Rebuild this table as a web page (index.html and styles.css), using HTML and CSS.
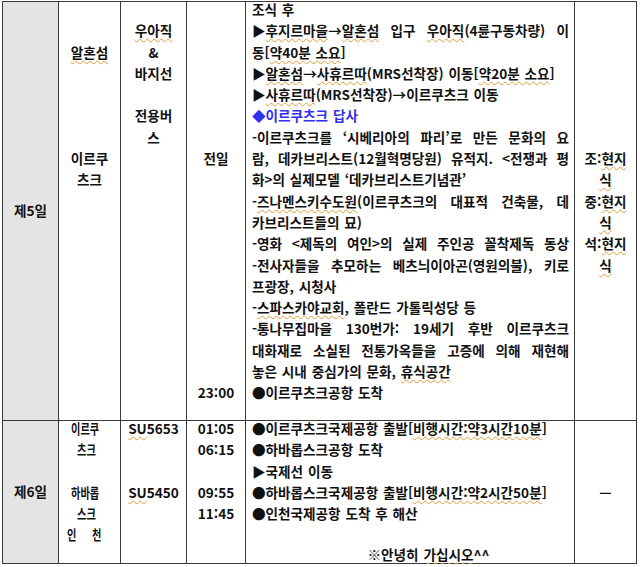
FILE: index.html
```html
<!DOCTYPE html>
<html lang="ko">
<head>
<meta charset="utf-8">
<title>일정표</title>
<link rel="stylesheet" href="styles.css">
</head>
<body>
<table class="sched">
  <colgroup>
    <col class="c-day"><col class="c-place"><col class="c-trans"><col class="c-time"><col class="c-plan"><col class="c-meal">
  </colgroup>
  <tr class="day5">
    <td class="day">제5일</td>
    <td class="ctr"><div class="in"><br><br><span class="sp">알혼섬</span><br><br><br><br><br>이르쿠<br>츠크</div></td>
    <td class="ctr"><div class="in"><br><span class="sp">우아직</span><br>&amp;<br>바지선<br><br>전용버<br>스</div></td>
    <td class="ctr"><div class="in"><br><br><br><br><br><br><br>전일<br><br><br><br><br><br><br><br><br><br><br>23:00</div></td>
    <td class="plan"><div class="in">
      <div class="ln">조식 후</div>
      <div class="ln j"><span class="kw">▶<span class="sp">후지르마을</span>→<span class="sp">알혼섬</span></span> 입구 <span class="sp">우아직</span>(4륜구동차량) 이</div>
      <div class="ln">동[<span class="sp">약40분 소요</span>]</div>
      <div class="ln">▶<span class="sp">알혼섬</span>→<span class="sp">사휴르따</span>(MRS선착장) 이동[<span class="sp">약20분 소요</span>]</div>
      <div class="ln">▶<span class="sp">사휴르따</span>(MRS선착장)→이르쿠츠크 이동</div>
      <div class="ln blue">◆이르쿠츠크 답사</div>
      <div class="ln j">-이르쿠츠크를 <span class="kw">‘시베리아의</span> <span class="kw">파리’로</span> 만든 문화의 요</div>
      <div class="ln j">람, 데카브리스트(12월혁명당원) 유적지. &lt;전쟁과 평</div>
      <div class="ln">화&gt;의 실제모델 ‘데카브리스트기념관’</div>
      <div class="ln j">-<span class="sp">즈나멘스키수도원</span>(이르쿠츠크의 대표적 건축물, 데</div>
      <div class="ln">카브리스트들의 묘)</div>
      <div class="ln j">-영화 &lt;제독의 여인&gt;의 실제 주인공 꼴착제독 동상</div>
      <div class="ln j">-전사자들을 추모하는 베츠늬이아곤(영원의불), 키로</div>
      <div class="ln">프광장, 시청사</div>
      <div class="ln">-<span class="sp">스파스카야교회</span>, 폴란드 가톨릭성당 등</div>
      <div class="ln j">-통나무집마을 130번가: 19세기 후반 이르쿠츠크</div>
      <div class="ln j">대화재로 소실된 전통가옥들을 고증에 의해 재현해</div>
      <div class="ln">놓은 시내 중심가의 문화, <span class="sp">휴식공간</span></div>
      <div class="ln">●이르쿠츠크공항 도착</div>
    </div></td>
    <td class="ctr"><div class="in"><br><br><br><br><br><br><br>조:<span class="sp">현지</span><br><span class="sp">식</span><br>중:<span class="sp">현지</span><br><span class="sp">식</span><br>석:<span class="sp">현지</span><br><span class="sp">식</span></div></td>
  </tr>
  <tr class="day6">
    <td class="day">제6일</td>
    <td class="ctr"><div class="in">
      <div class="nar"><span>이르쿠</span></div>
      <div class="nar"><span>츠크</span></div>
      <div class="nar">&nbsp;</div>
      <div class="nar"><span>하바롭</span></div>
      <div class="nar"><span>스크</span></div>
      <div class="nar"><span class="wide">인 천</span></div>
    </div></td>
    <td class="ctr"><div class="in"><span class="sp">SU</span>5653<br><br><br><span class="sp">SU</span>5450</div></td>
    <td class="ctr"><div class="in">01:05<br>06:15<br><br>09:55<br>11:45</div></td>
    <td class="plan"><div class="in">
      <div class="ln">●이르쿠츠크국제공항 출발[<span class="sp">비행시간:약3시간10분</span>]</div>
      <div class="ln">●하바롭스크공항 도착</div>
      <div class="ln">▶국제선 이동</div>
      <div class="ln">●하바롭스크국제공항 출발[<span class="sp">비행시간:약2시간50분</span>]</div>
      <div class="ln">●인천국제공항 도착 후 해산</div>
      <div class="ln">&nbsp;</div>
      <div class="ln bye">※안녕히 <span class="sp">가십시오</span>^^</div>
    </div></td>
    <td class="meal">—</td>
  </tr>
</table>
</body>
</html>
```

FILE: styles.css
```css
html, body {
  margin: 0;
  padding: 0;
  background: #ffffff;
}

body {
  font-family: "Noto Sans CJK KR", "Malgun Gothic", sans-serif;
  font-weight: 700;
  font-size: 13.6px;
  line-height: 21.3px;
  color: #111111;
}

.sched {
  border-collapse: collapse;
  table-layout: fixed;
  width: 634px;
  margin: 1px 0 0 2px;
}

.c-day { width: 56px; }
.c-place { width: 62px; }
.c-trans { width: 66px; }
.c-time { width: 59px; }
.c-plan { width: 329px; }
.c-meal { width: 62px; }

.sched td {
  border: 1px solid #3a3a3a;
  padding: 0;
  vertical-align: top;
}

.day5 td { height: 418px; }
.day6 td { height: 142px; }

.sched td.day {
  background: #e4e4e4;
  text-align: center;
  vertical-align: middle;
}

.sched td.ctr {
  text-align: center;
}

.sched td.plan {
  padding: 0 5px 0 6px;
}

.sched td.meal {
  text-align: center;
  vertical-align: middle;
}

.in {
  margin-top: -3px;
}

.ln {
  white-space: nowrap;
  word-spacing: 1px;
}

.ln.j {
  text-align: justify;
  text-align-last: justify;
}

.kw {
  display: inline-block;
}

.blue {
  color: #2f2ff0;
}

.bye {
  text-align: center;
  padding-left: 36px;
  line-height: 17px;
}

.sp {
  text-decoration: underline wavy #e39a3a 1px;
  text-underline-offset: 2px;
  text-decoration-skip-ink: none;
}

.nar {
  text-align: center;
}

.nar span {
  display: inline-block;
  transform: scaleX(0.75);
  transform-origin: left center;
}

.nar .wide {
  word-spacing: 17px;
}
```
